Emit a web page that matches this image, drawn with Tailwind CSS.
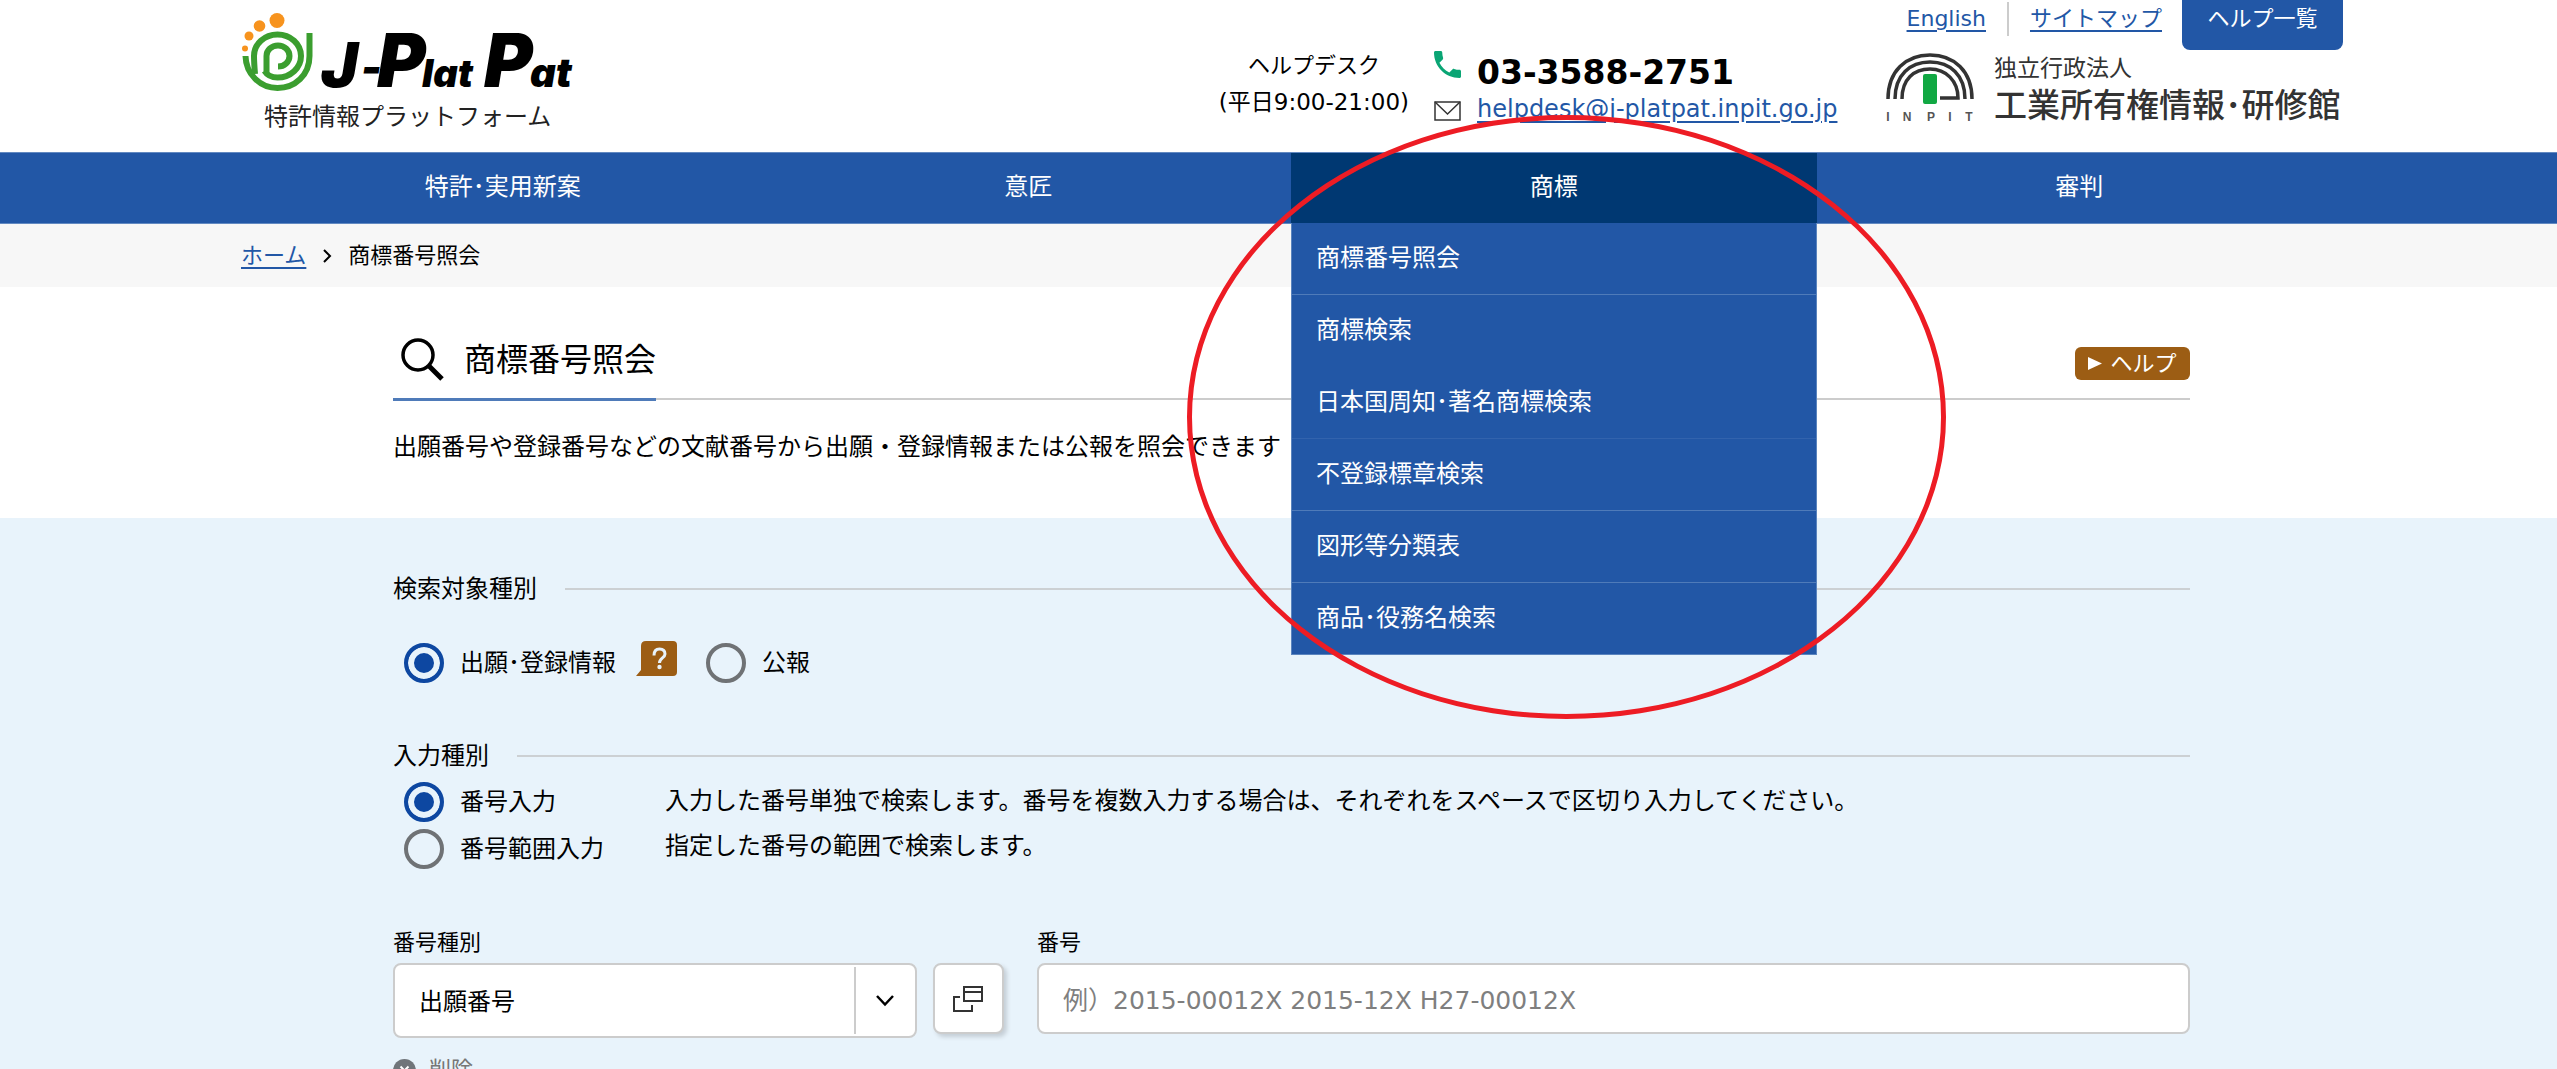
<!DOCTYPE html>
<html lang="ja">
<head>
<meta charset="utf-8">
<title>商標番号照会 | J-PlatPat</title>
<script src="https://cdn.jsdelivr.net/npm/@tailwindcss/browser@4"></script>
</head>
<body class="h-screen overflow-hidden bg-[#e8f3fb] font-['DejaVu_Sans','Noto_Sans_CJK_JP',sans-serif] font-normal text-black text-[24px] leading-[36px]">

<header class="flex h-[152px] items-start justify-between bg-white pl-[241px] pr-[214px]">
  <a href="#" aria-label="J-PlatPat" class="block">
    <svg class="block" width="340" height="140" viewBox="0 0 340 140">
      <g fill="#f7931e">
        <circle cx="36" cy="20.500" r="7.500"/><circle cx="18.500" cy="26" r="5.800"/><circle cx="8" cy="36" r="4.500"/><circle cx="4" cy="48.500" r="3"/>
      </g>
      <g fill="none" stroke="#3b9e2f" stroke-width="6">
        <path d="M4.500 56C5 74 19 88 36.500 88C54 88 68.500 75 68.500 56V33"/>
        <path d="M14 74C13.500 68 13 62 13 56A23.500 21.500 0 1 1 36.500 77.500C31 77.500 26 75 23.500 71"/>
        <path d="M25.500 73V56A11.500 10.500 0 1 1 37 66.500"/>
      </g>
      <g class="font-['Inter',sans-serif] font-black italic" fill="#000">
        <text x="80" y="87" font-size="62">J</text>
        <text x="120" y="83" font-size="44">-</text>
        <text x="136" y="87" font-size="74">P</text>
        <text x="181" y="87" font-size="38">lat</text>
        <text x="243" y="87" font-size="74">P</text>
        <text x="289" y="87" font-size="40">at</text>
      </g>
      <text x="23" y="125" class="font-['Noto_Sans_CJK_JP',sans-serif]" font-size="24" font-weight="400" fill="#222">特許情報プラットフォーム</text>
    </svg>
  </a>

  <div class="flex items-start">
    <div class="mt-[48px] text-center">
      <p class="text-[22px]">ヘルプデスク</p>
      <p class="text-[23px]">(平日9:00-21:00)</p>
    </div>
    <div class="mt-[49px] ml-[25px] grid w-[408px] grid-cols-[27px_auto] gap-x-4">
      <svg class="mt-[2px] block" width="27" height="27" viewBox="3 3 18 18"><path fill="#0aa574" d="M6.620 10.790c1.440 2.830 3.760 5.140 6.590 6.590l2.200-2.200c.27-.27.67-.36 1.020-.24 1.120.37 2.330.57 3.570.57.55 0 1 .45 1 1V20c0 .55-.45 1-1 1-9.390 0-17-7.610-17-17 0-.55.45-1 1-1h3.500c.55 0 1 .45 1 1 0 1.250.2 2.450.57 3.570.11.35.03.74-.25 1.020l-2.200 2.200z"/></svg>
      <p class="h-[42px] text-[33px] leading-[48px] font-bold">03-3588-2751</p>
      <svg class="mt-[10px] block" width="27" height="20" viewBox="0 0 27 20" fill="none" stroke="#333" stroke-width="1.500"><rect x="1" y="1" width="25" height="18"/><path d="M1 1L13.500 13L26 1"/></svg>
      <a href="#" class="text-[#2257a6] underline underline-offset-4">helpdesk@j-platpat.inpit.go.jp</a>
    </div>
    <div class="ml-[44px] w-[457px]">
      <div class="flex h-[50px] items-start justify-end text-[22px] leading-[38px]">
        <a href="#" class="text-[#2257a6] underline underline-offset-4">English</a>
        <span class="mx-[21px] mt-[2px] h-[34px] w-[2px] bg-[#ccc]"></span>
        <a href="#" class="text-[#2257a6] underline underline-offset-4">サイトマップ</a>
        <a href="#" class="ml-5 h-[50px] w-[161px] rounded-b-lg bg-[#2257a6] text-center text-white">ヘルプ一覧</a>
      </div>
      <div class="mt-[3px] flex items-start">
        <svg class="block" width="90" height="70" viewBox="0 0 90 70">
          <g fill="none" stroke="#333" stroke-width="3.500">
            <path d="M2 46C2 18 20 2 44 2S86 18 86 46"/>
            <path d="M9 46C9 22 24 9 44 9S79 22 79 46"/>
            <path d="M16 46C16 26 28 16 44 16S72 28 72 45H54"/>
          </g>
          <rect x="37" y="21" width="14" height="30" rx="2" fill="#11a843"/>
          <g class="font-['Liberation_Sans',sans-serif] font-bold" font-size="12" fill="#555" text-anchor="middle"><text x="2" y="68">I</text><text x="21" y="68">N</text><text x="45" y="68">P</text><text x="64" y="68">I</text><text x="83" y="68">T</text></g>
        </svg>
        <div class="ml-[18px] whitespace-nowrap text-[#333]">
          <p class="text-[23px] leading-[30px]">独立行政法人</p>
          <p class="text-[33px] leading-[46px] font-medium">工業所有権情報･研修館</p>
        </div>
      </div>
    </div>
  </div>
</header>

<nav class="h-[72px] border-y border-[#6289c1] bg-[#2257a6] pl-[240px] pr-[215px] text-white">
  <ul class="flex h-[70px] text-center leading-[68px]">
    <li class="flex-1"><a href="#" class="block">特許･実用新案</a></li>
    <li class="flex-1"><a href="#" class="block">意匠</a></li>
    <li class="relative z-10 flex-1">
      <a href="#" class="block h-[70px] bg-[#003872]">商標</a>
      <ul class="absolute inset-x-0 top-[70px] border-x border-b border-[#5a84be] bg-[#2257a6] text-left leading-[71px]">
        <li class="border-b border-[#4f7bb9] px-6"><a href="#" class="block">商標番号照会</a></li>
        <li class="border-b border-[#2257a6] px-6"><a href="#" class="block">商標検索</a></li>
        <li class="border-b border-[#3263ad] px-6"><a href="#" class="block">日本国周知･著名商標検索</a></li>
        <li class="border-b border-[#4f7bb9] px-6"><a href="#" class="block">不登録標章検索</a></li>
        <li class="border-b border-[#4f7bb9] px-6"><a href="#" class="block">図形等分類表</a></li>
        <li class="px-6"><a href="#" class="block">商品･役務名検索</a></li>
      </ul>
      <div class="pointer-events-none absolute -top-[38px] -left-[104px] h-[604px] w-[759px] rounded-[50%] border-[5px] border-[#ed1c24]"></div>
    </li>
    <li class="flex-1"><a href="#" class="block">審判</a></li>
  </ul>
</nav>

<div class="flex h-[63px] items-center bg-[#f7f7f7] pl-[241px] pr-[214px] text-[22px]">
  <a href="#" class="text-[#2257a6] underline underline-offset-4">ホーム</a>
  <svg class="mx-[14px] block" width="14" height="14" viewBox="0 0 14 14" fill="none" stroke="#000" stroke-width="2"><path d="M4 1L10 7L4 13"/></svg>
  <span>商標番号照会</span>
</div>

<main>
  <section class="h-[231px] bg-white pl-[393px] pr-[367px] pt-[36px]">
    <div class="flex h-[77px] items-start justify-between border-b-2 border-[#ccc]">
      <h1 class="flex h-[78px] shrink-0 items-start border-b-3 border-[#4f7bb9] text-[32px] leading-[74px]">
        <svg class="mr-5 ml-2 mt-[15px] block" width="43" height="43" viewBox="0 0 43 43" fill="none" stroke="#000"><circle cx="17" cy="17" r="15" stroke-width="3.500"/><path d="M27 27L41 41" stroke-width="5"/></svg>商標番号照会
      </h1>
      <a href="#" class="mt-6 flex h-[33px] w-[115px] items-center justify-center gap-2 rounded-md bg-[#9c5d14] text-[22px] leading-[30px] text-white">
        <svg class="block" width="14" height="13" viewBox="0 0 14 13"><path fill="#fff" d="M0 0L14 6.500L0 13z"/></svg>ヘルプ</a>
    </div>
    <p class="mt-[29px] whitespace-nowrap">出願番号や登録番号などの文献番号から出願・登録情報または公報を照会できます</p>
  </section>

  <form class="pl-[393px] pr-[367px] pt-[53px]">
    <fieldset>
      <legend class="float-left flex w-full items-center gap-7">検索対象種別<span class="h-[2px] flex-1 bg-[#ccd0d3]"></span></legend>
      <div class="clear-both flex h-[112px] items-center pl-[11px]">
        <label class="flex items-center gap-4"><input type="radio" name="target" checked class="size-10 appearance-none rounded-full border-4 border-[#6f7275] checked:border-[#0d47a1] checked:bg-[#0d47a1] checked:shadow-[inset_0_0_0_6px_#e8f3fb]">出願･登録情報</label>
        <button type="button" aria-label="ヘルプ" class="-mt-2 ml-5">
          <svg class="block" width="42" height="36" viewBox="0 0 42 36"><path fill="#9c5d14" d="M10 0H37Q41 0 41 4V31Q41 35 37 35H0L5 29V5Q5 0 10 0z"/><path d="M18 14.500C18 10 20 8 23.500 8C27 8 29 10 29 13C29 17 23.500 17 23.500 22" fill="none" stroke="#e8f3fb" stroke-width="3"/><circle cx="23.500" cy="26" r="2.200" fill="#e8f3fb"/></svg>
        </button>
        <label class="ml-7 flex items-center gap-4"><input type="radio" name="target" class="size-10 appearance-none rounded-full border-4 border-[#6f7275] checked:border-[#0d47a1] checked:bg-[#0d47a1] checked:shadow-[inset_0_0_0_6px_#e8f3fb]">公報</label>
      </div>
    </fieldset>

    <fieldset class="mt-[19px]">
      <legend class="float-left flex w-full items-center gap-7">入力種別<span class="h-[2px] flex-1 bg-[#ccd0d3]"></span></legend>
      <div class="clear-both grid grid-cols-[261px_1fr] pt-1 pl-[11px] leading-[46px]">
        <label class="flex h-12 items-center gap-4"><input type="radio" name="mode" checked class="size-10 appearance-none rounded-full border-4 border-[#6f7275] checked:border-[#0d47a1] checked:bg-[#0d47a1] checked:shadow-[inset_0_0_0_6px_#e8f3fb]">番号入力</label>
        <p>入力した番号単独で検索します。番号を複数入力する場合は、それぞれをスペースで区切り入力してください。</p>
        <label class="flex h-[46px] items-center gap-4"><input type="radio" name="mode" class="size-10 appearance-none rounded-full border-4 border-[#6f7275] checked:border-[#0d47a1] checked:bg-[#0d47a1] checked:shadow-[inset_0_0_0_6px_#e8f3fb]">番号範囲入力</label>
        <p class="leading-[40px]">指定した番号の範囲で検索します。</p>
      </div>
    </fieldset>

    <div class="mt-[53px] flex items-start">
      <div class="w-[524px]">
        <label for="kind" class="block h-[38px] text-[22px]">番号種別</label>
        <div class="relative">
          <select id="kind" class="block h-[75px] w-full appearance-none rounded-lg border-2 border-[#ccc] bg-white px-6 pt-[3px]"><option>出願番号</option></select>
          <span class="pointer-events-none absolute top-1 right-0 bottom-1 flex w-[63px] items-center justify-center border-l-2 border-[#ccc]">
            <svg class="mr-1 block" width="20" height="12" viewBox="0 0 20 12" fill="none" stroke="#000" stroke-width="2.500"><path d="M2 1L10 9.500L18 1"/></svg>
          </span>
        </div>
      </div>
      <button type="button" aria-label="一覧を開く" class="mt-[38px] ml-4 flex h-[71px] w-[71px] items-center justify-center rounded-lg border-2 border-[#ccc] bg-white shadow-[3px_3px_4px_#c5ced6]">
        <svg class="mr-[2px] block" width="32" height="28" viewBox="0 0 32 28" fill="none" stroke="#333" stroke-width="2"><rect x="12" y="2" width="18" height="14"/><path d="M12 7H30M8 12H2V26H20V20"/></svg>
      </button>
      <div class="ml-[33px] flex-1">
        <label for="number" class="block h-[38px] text-[22px]">番号</label>
        <input id="number" type="text" placeholder="例）2015-00012X 2015-12X H27-00012X" class="block h-[71px] w-full rounded-lg border-2 border-[#ccc] bg-white px-6 pt-[3px] text-[25px] placeholder:text-[#7f7f7f]">
      </div>
    </div>
    <button type="button" class="mt-[14px] flex items-center gap-[13px] text-[22px] text-[#767676]">
      <svg class="block" width="23" height="23" viewBox="0 0 23 23"><circle cx="11.500" cy="11.500" r="11.500" fill="#70757a"/><path d="M7.500 7.500L15.500 15.500M15.500 7.500L7.500 15.500" stroke="#fff" stroke-width="2"/></svg>削除
    </button>
  </form>
</main>
</body>
</html>
